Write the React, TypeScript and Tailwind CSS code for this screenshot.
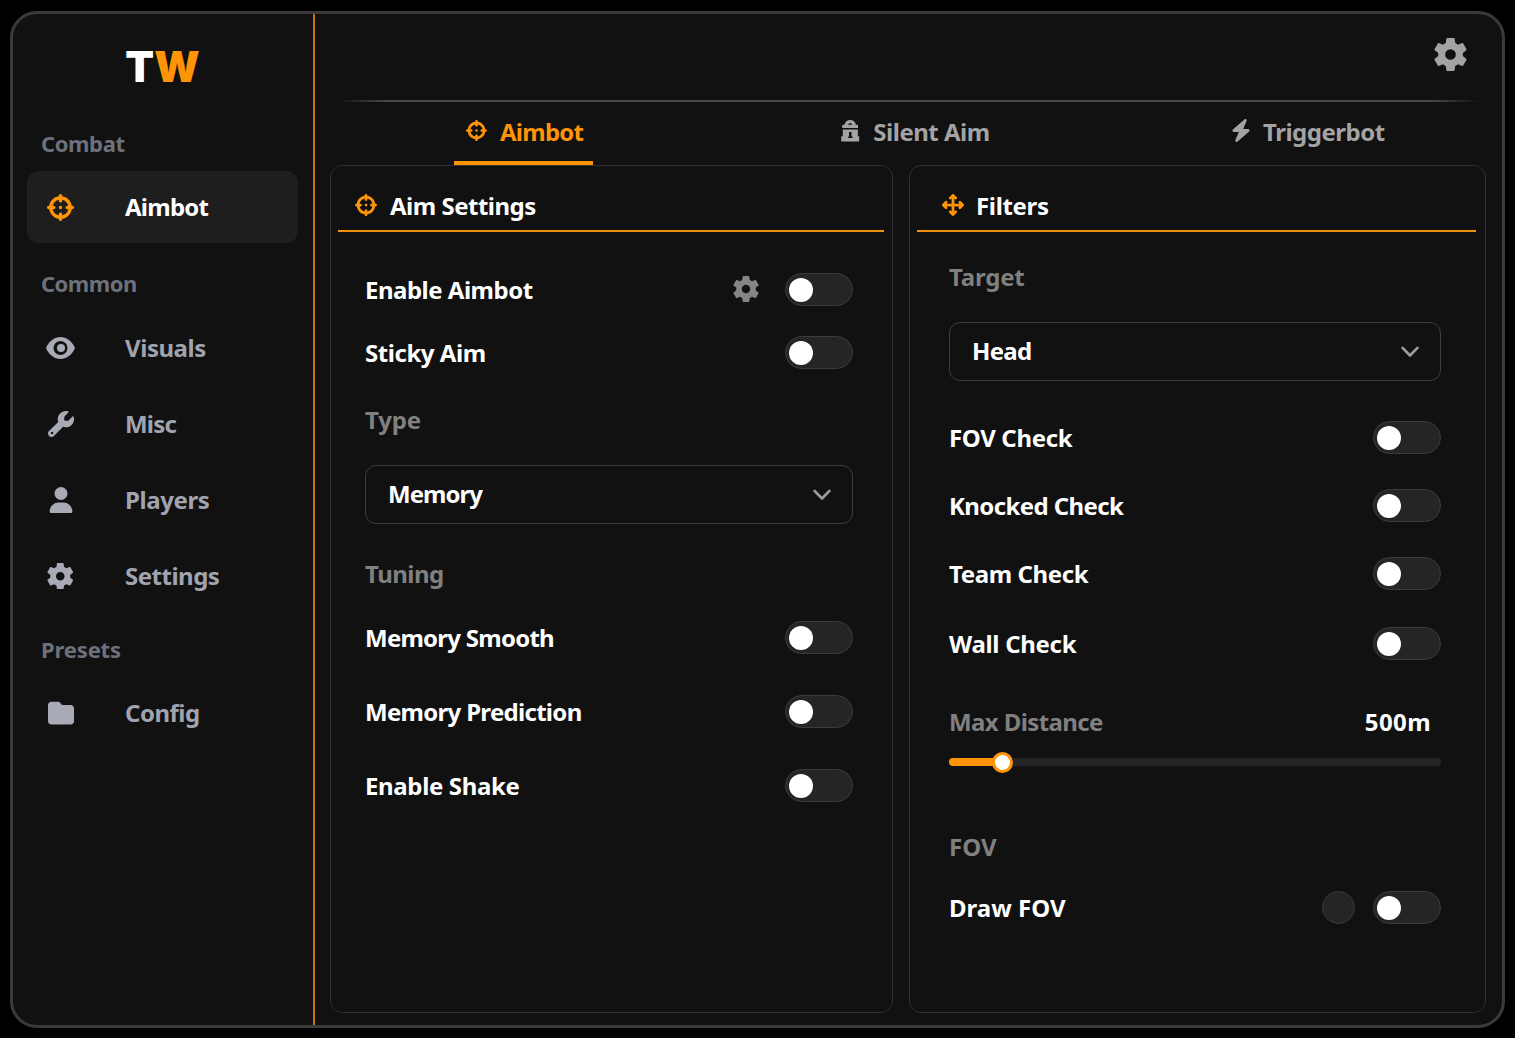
import type { ReactNode } from "react";
import {
  FaArrowsUpDownLeftRight,
  FaBolt,
  FaCrosshairs,
  FaFolder,
  FaUser,
  FaWrench,
} from "react-icons/fa6";

function Gear({ className }: { className: string }) {
  return (
    <svg viewBox="2.4 2.4 19.2 19.2" className={className} fill="currentColor" fillRule="evenodd">
      <path d="M19.14 12.94c.04-.3.06-.61.06-.94 0-.32-.02-.64-.07-.94l2.03-1.58c.18-.14.23-.41.12-.61l-1.92-3.32c-.12-.22-.37-.29-.59-.22l-2.39.96c-.5-.38-1.03-.7-1.62-.94l-.36-2.54c-.04-.24-.24-.41-.48-.41h-3.84c-.24 0-.43.17-.47.41l-.36 2.54c-.59.24-1.13.57-1.62.94l-2.39-.96c-.22-.08-.47 0-.59.22L2.74 8.87c-.12.21-.08.47.12.61l2.03 1.58c-.05.3-.09.63-.09.94s.02.64.07.94l-2.03 1.58c-.18.14-.23.41-.12.61l1.92 3.32c.12.22.37.29.59.22l2.39-.96c.5.38 1.03.7 1.62.94l.36 2.54c.05.24.24.41.48.41h3.84c.24 0 .44-.17.47-.41l.36-2.54c.59-.24 1.13-.56 1.62-.94l2.39.96c.22.08.47 0 .59-.22l1.92-3.32c.12-.22.07-.47-.12-.61l-2.01-1.58zM12 8.9a3.1 3.1 0 1 0 0 6.2a3.1 3.1 0 1 0 0-6.2z" />
    </svg>
  );
}

function Eye() {
  return (
    <svg viewBox="0 0 29 22" className="h-[22px] w-[29px]" fill="currentColor" fillRule="evenodd">
      <path d="M.4 10C3.6 3.800 8.700 0 14.500 0S25.400 3.800 28.600 10q.5 1 0 2C25.400 18.200 20.300 22 14.500 22S3.600 18.200.4 12q-.5-1 0-2zM14.500 4a7 7 0 1 0 0 14a7 7 0 1 0 0-14z" />
      <circle cx="15" cy="11" r="4" />
    </svg>
  );
}

function Lock() {
  return (
    <svg viewBox="0 0 20 22" className="h-[22px] w-5" fill="currentColor" fillRule="evenodd">
      <path d="M3 4.800H4.500C5 1.800 7.200.1 10.200.1S15.400 1.800 15.900 4.800H17.400Q18 4.800 18 5.600V7.900H2.200V5.600Q2.200 4.800 3 4.800zM8 4.800H12.400C12 3.700 11.400 3.200 10.200 3.200S8.400 3.700 8 4.800z" />
      <path d="M2.800 9.500H17.900V16.200H19.200V21.500H1.200V16.200H2.800zM9 12.100V16.400H8.200V18H12.500V16.400H11.500V12.100z" />
    </svg>
  );
}

function Chevron() {
  return (
    <svg viewBox="0 0 18 12" className="h-3 w-[18px]" fill="none" stroke="#9b9b9b" strokeWidth="2.700" strokeLinecap="round" strokeLinejoin="round">
      <path d="M1.600 1.900L9 9.500L16.400 1.900" />
    </svg>
  );
}

function NavItem({ icon, label, className, active }: { icon: ReactNode; label: string; className: string; active?: boolean }) {
  return (
    <a
      className={`flex h-[72px] items-center rounded-[12px] text-2xl font-bold ${
        active ? "bg-[#1e1e1e] text-white" : "text-[#a0a4af]"
      } ${className}`}
    >
      <span className={`flex w-[67px] shrink-0 justify-center ${active ? "text-[#ff9408]" : "text-[#a8abb6]"}`}>{icon}</span>
      <span className="ml-[31px]">{label}</span>
    </a>
  );
}

function NavHeading({ children, className }: { children: ReactNode; className: string }) {
  return <h3 className={`ml-3.5 flex h-8 items-center pb-0.5 text-[22px] font-bold text-[#6d717c] ${className}`}>{children}</h3>;
}

function Toggle() {
  return (
    <span className="flex h-[33px] w-[68px] shrink-0 items-center self-start rounded-full border border-[#3c3c3c] bg-[#252525] pl-[3px]">
      <span className="size-6 rounded-full bg-white" />
    </span>
  );
}

function Row({ label, className, extra }: { label: string; className: string; extra?: ReactNode }) {
  return (
    <div className={`flex h-[34px] shrink-0 items-center ${className}`}>
      <span className="flex-1">{label}</span>
      {extra}
      <Toggle />
    </div>
  );
}

function Group({ children, className }: { children: ReactNode; className: string }) {
  return <h4 className={`flex h-[34px] shrink-0 items-center text-[#808080] ${className}`}>{children}</h4>;
}

function Select({ value, className }: { value: string; className: string }) {
  return (
    <div className={`flex h-[59px] shrink-0 items-center justify-between rounded-[11px] border-[1.5px] border-[#3e3e3e] pr-[21px] pl-[22px] ${className}`}>
      <span className="pb-0.5">{value}</span>
      <Chevron />
    </div>
  );
}

function Panel({ icon, title, className, head, body, children }: { icon: ReactNode; title: string; className: string; head: string; body: string; children: ReactNode }) {
  return (
    <section className={`flex h-[848px] flex-col rounded-[12px] border-[1.5px] border-[#303030] text-2xl font-bold text-white ${className}`}>
      <header className={`flex h-[66px] shrink-0 items-center border-b-2 border-[#f0900f] pt-4 ${head}`}>
        <span className="mb-[3px] text-[22px] text-[#ff9408]">{icon}</span>
        <h2>{title}</h2>
      </header>
      <div className={`flex flex-col ${body}`}>{children}</div>
    </section>
  );
}

export default function App() {
  return (
    <div className="h-[1038px] w-[1515px] overflow-hidden bg-black pt-[11px] pl-2.5 font-['Noto_Sans',sans-serif] leading-none whitespace-nowrap">
      <div className="flex h-[1017px] w-[1495px] overflow-hidden rounded-[27px] border-3 border-[#3a3a3a] bg-[#111111]">
        <aside className="w-[302px] shrink-0 border-r-2 border-[#c2770f] pr-[15px] pl-3.5">
          <div className="flex h-[114px] items-center justify-center pb-2 font-['Inter',sans-serif] text-[42px] font-black">
            <span className="text-white">T</span>
            <span className="text-[#ff9408]">W</span>
          </div>
          <NavHeading className="tracking-[-0.4px]">Combat</NavHeading>
          <NavItem active className="mt-[11px] tracking-[-0.75px]" label="Aimbot" icon={<FaCrosshairs className="size-[27px]" />} />
          <NavHeading className="mt-[25px] tracking-[-0.5px]">Common</NavHeading>
          <NavItem className="mt-3 tracking-[-0.45px]" label="Visuals" icon={<Eye />} />
          <NavItem className="mt-1 tracking-[-0.8px]" label="Misc" icon={<FaWrench className="size-[26px]" />} />
          <NavItem className="mt-1 tracking-[-0.4px]" label="Players" icon={<FaUser className="size-[26px]" />} />
          <NavItem className="mt-1 tracking-[-0.5px]" label="Settings" icon={<Gear className="size-[26.5px]" />} />
          <NavHeading className="mt-[22px] tracking-[-0.15px]">Presets</NavHeading>
          <NavItem className="mt-[11px] tracking-[-0.5px]" label="Config" icon={<FaFolder className="size-[26px]" />} />
        </aside>

        <main className="flex flex-1 flex-col">
          <div className="flex h-[86px] shrink-0 items-center justify-end pr-[37px] pb-[6px] text-[#a3a3a3]">
            <Gear className="size-[33px]" />
          </div>
          <div className="ml-[23px] h-[2px] w-[1141px] shrink-0 bg-[linear-gradient(to_right,transparent,#464646_4%,#464646_96%,transparent)]" />
          <nav className="ml-3 grid h-[63px] w-[1177px] shrink-0 grid-cols-3 justify-items-center text-2xl font-bold text-[#a3a3a3]">
            <a className="flex w-[139px] items-center justify-center border-b-4 border-[#ff9408] pl-[3px] tracking-[-0.75px] text-[#ff9408]">
              <FaCrosshairs className="mb-[2px] size-[21px]" />
              <span className="ml-[13px]">Aimbot</span>
            </a>
            <a className="flex items-center pr-px pb-[3px] tracking-[-0.5px]">
              <span className="mb-[2px]"><Lock /></span>
              <span className="ml-[13px]">Silent Aim</span>
            </a>
            <a className="flex items-center pb-[3px] tracking-[-0.5px]">
              <FaBolt className="mb-[3px] h-[23px] w-[20px]" />
              <span className="ml-[12px]">Triggerbot</span>
            </a>
          </nav>

          <div className="ml-[15px] flex gap-[16px]">
            <Panel
              className="w-[563px]"
              head="mr-2 ml-[7px] pl-[17px] gap-[13px] tracking-[-0.5px]"
              body="pl-[34px] pr-[39px]"
              icon={<FaCrosshairs />}
              title="Aim Settings"
            >
              <Row className="mt-[41px] tracking-[-0.5px]" label="Enable Aimbot" extra={<Gear className="mr-[26px] mb-[2px] size-[26px] text-[#858585]" />} />
              <Row className="mt-[29px] tracking-[-0.45px]" label="Sticky Aim" />
              <Group className="mt-[33px] tracking-[-0.2px]">Type</Group>
              <Select className="mt-[28px] tracking-[-0.95px]" value="Memory" />
              <Group className="mt-[33px] tracking-[-0.5px]">Tuning</Group>
              <Row className="mt-[30px] tracking-[-0.75px]" label="Memory Smooth" />
              <Row className="mt-[40px] tracking-[-0.7px]" label="Memory Prediction" />
              <Row className="mt-[40px] tracking-[-0.35px]" label="Enable Shake" />
            </Panel>

            <Panel
              className="w-[577px]"
              head="mr-[9px] ml-[7px] pl-[25px] gap-3 tracking-[-0.35px]"
              body="pl-[39px] pr-[44px]"
              icon={<FaArrowsUpDownLeftRight />}
              title="Filters"
            >
              <Group className="mt-[28px] tracking-[-0.2px]">Target</Group>
              <Select className="mt-[28px] tracking-[-0.7px]" value="Head" />
              <Row className="mt-[40px] tracking-[-0.35px]" label="FOV Check" />
              <Row className="mt-[34px] tracking-[-0.6px]" label="Knocked Check" />
              <Row className="mt-[34px] tracking-[-0.4px]" label="Team Check" />
              <Row className="mt-[36px] tracking-[-0.3px]" label="Wall Check" />
              <div className="mt-[44px] flex h-[34px] items-center justify-between pr-[10px]">
                <span className="tracking-[-0.6px] text-[#808080]">Max Distance</span>
                <span className="tracking-[0.4px]">500m</span>
              </div>
              <div className="mt-[19px] flex h-2 items-center rounded-full bg-[#252525]">
                <span className="h-2 w-[45px] rounded-l-full bg-[#ff9408]" />
                <span className="-ml-[2px] size-[21px] rounded-full border-3 border-[#ff9408] bg-white" />
              </div>
              <Group className="mt-[64px]">FOV</Group>
              <Row
                className="mt-[27px]"
                label="Draw FOV"
                extra={<span className="mr-[18px] size-[33px] self-start rounded-full border border-[#3a3a3a] bg-[#252525]" />}
              />
            </Panel>
          </div>
        </main>
      </div>
    </div>
  );
}
